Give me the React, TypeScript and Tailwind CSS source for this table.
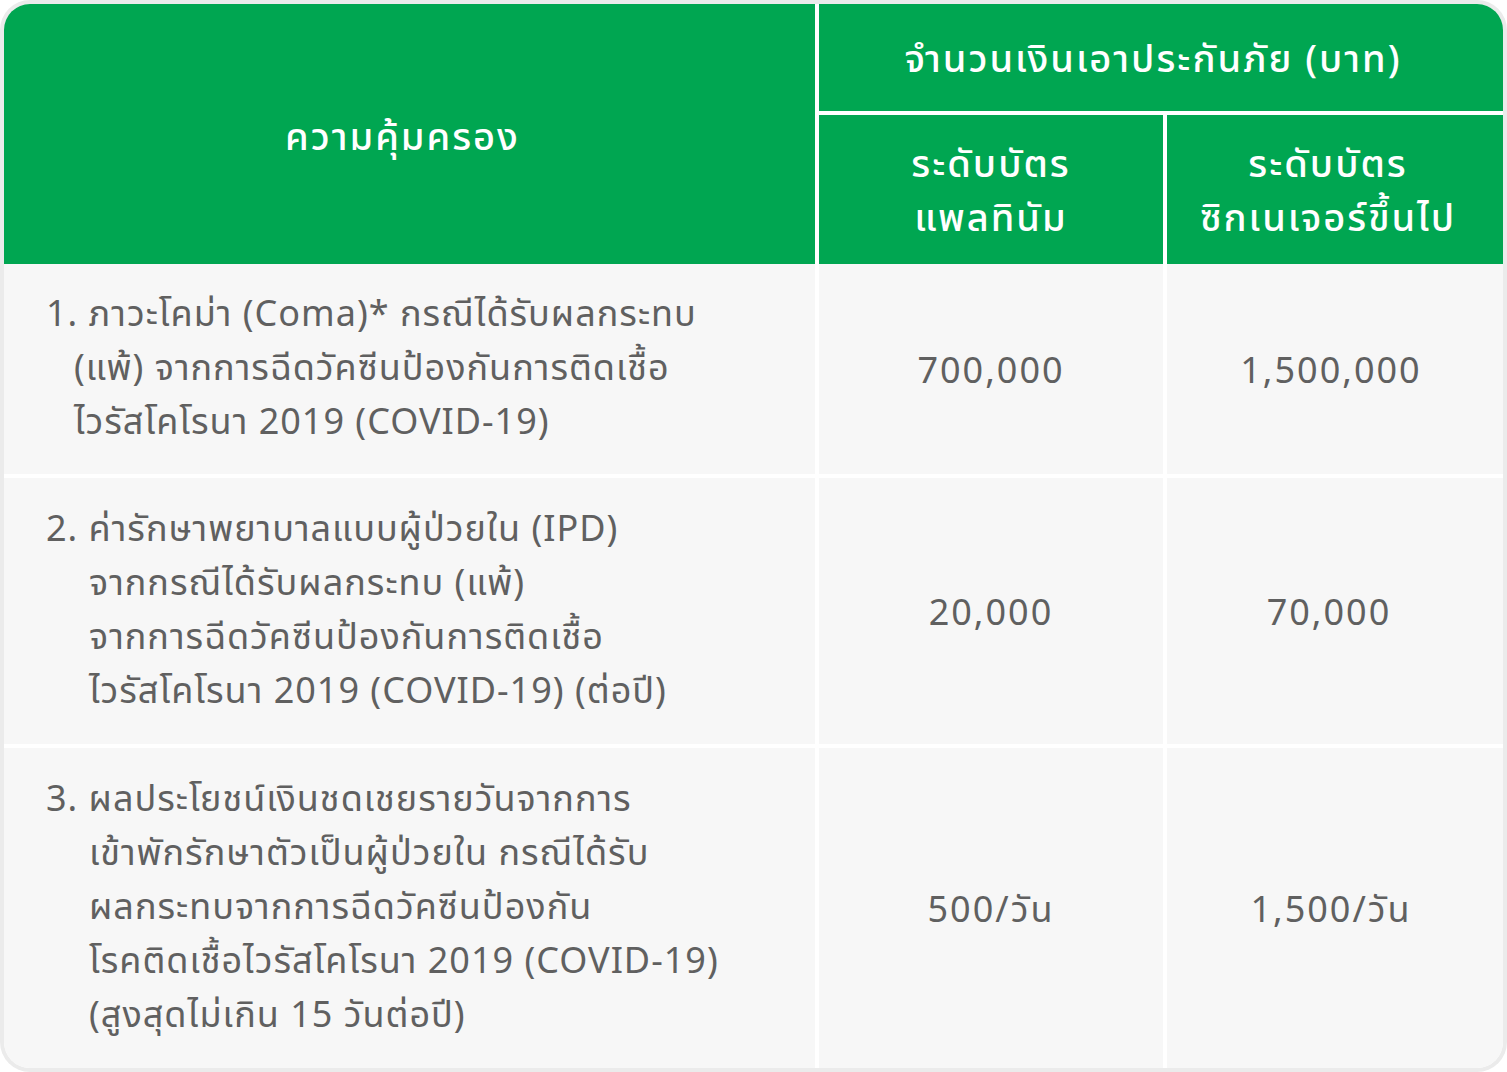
import React from "react";

const font = { fontFamily: '"Noto Sans Thai", "Noto Sans", "Liberation Sans", sans-serif' };

export default function App() {
  const cell = "bg-[#f7f7f7] flex items-center justify-center text-[#606060] text-[36px] tracking-[2px] pt-[5px]";
  const body = "bg-[#f7f7f7] text-[#606060] text-[36px] tracking-[1px] flex flex-col justify-center leading-[54px] pl-[42px]";
  const head = "bg-[#00a651] text-white text-[38px] font-medium tracking-[2px]";
  return (
    <div className="w-[1507px] h-[1072px] bg-white">
      <div className="w-[1507px] h-[1072px] bg-[#ebebeb] rounded-[30px] p-[4px]" style={font}>
        <div className="w-full h-full rounded-[26px] overflow-hidden bg-white grid grid-cols-[811px_344px_1fr] grid-rows-[107px_4px_149px_210px_4px_266px_4px_1fr] gap-x-[4px]">
          <div className={`row-start-1 row-span-3 col-start-1 ${head} flex items-center justify-center pr-[14px] pt-[8px]`}>
            ความคุ้มครอง
          </div>
          <div className={`row-start-1 col-start-2 col-span-2 ${head} tracking-[2.5px] flex items-center justify-center pr-[16px] pt-[6px]`}>
            จำนวนเงินเอาประกันภัย (บาท)
          </div>
          <div className={`row-start-3 col-start-2 ${head} flex flex-col items-center justify-center leading-[54px] pt-[6px]`}>
            <span>ระดับบัตร</span>
            <span>แพลทินัม</span>
          </div>
          <div className={`row-start-3 col-start-3 ${head} flex flex-col items-center justify-center leading-[54px] pt-[6px] pr-[14px]`}>
            <span>ระดับบัตร</span>
            <span>ซิกเนเจอร์ขึ้นไป</span>
          </div>

          <div className={`row-start-4 col-start-1 ${body}`}>
            <span>1. ภาวะโคม่า (Coma)* กรณีได้รับผลกระทบ</span>
            <span className="pl-[28px]">(แพ้) จากการฉีดวัคซีนป้องกันการติดเชื้อ</span>
            <span className="pl-[28px]">ไวรัสโคโรนา 2019 (COVID-19)</span>
          </div>
          <div className={`row-start-4 col-start-2 ${cell}`}>700,000</div>
          <div className={`row-start-4 col-start-3 ${cell} tracking-[1px] pr-[8px]`}>1,500,000</div>

          <div className={`row-start-6 col-start-1 ${body}`}>
            <span>2. ค่ารักษาพยาบาลแบบผู้ป่วยใน (IPD)</span>
            <span className="pl-[43px]">จากกรณีได้รับผลกระทบ (แพ้)</span>
            <span className="pl-[43px]">จากการฉีดวัคซีนป้องกันการติดเชื้อ</span>
            <span className="pl-[43px]">ไวรัสโคโรนา 2019 (COVID-19) (ต่อปี)</span>
          </div>
          <div className={`row-start-6 col-start-2 ${cell}`}>20,000</div>
          <div className={`row-start-6 col-start-3 ${cell} pr-[12px]`}>70,000</div>

          <div className={`row-start-8 col-start-1 ${body}`}>
            <span>3. ผลประโยชน์เงินชดเชยรายวันจากการ</span>
            <span className="pl-[43px]">เข้าพักรักษาตัวเป็นผู้ป่วยใน กรณีได้รับ</span>
            <span className="pl-[43px]">ผลกระทบจากการฉีดวัคซีนป้องกัน</span>
            <span className="pl-[43px]">โรคติดเชื้อไวรัสโคโรนา 2019 (COVID-19)</span>
            <span className="pl-[43px]">(สูงสุดไม่เกิน 15 วันต่อปี)</span>
          </div>
          <div className={`row-start-8 col-start-2 ${cell}`}>500/วัน</div>
          <div className={`row-start-8 col-start-3 ${cell} pr-[8px]`}>1,500/วัน</div>
        </div>
      </div>
    </div>
  );
}
